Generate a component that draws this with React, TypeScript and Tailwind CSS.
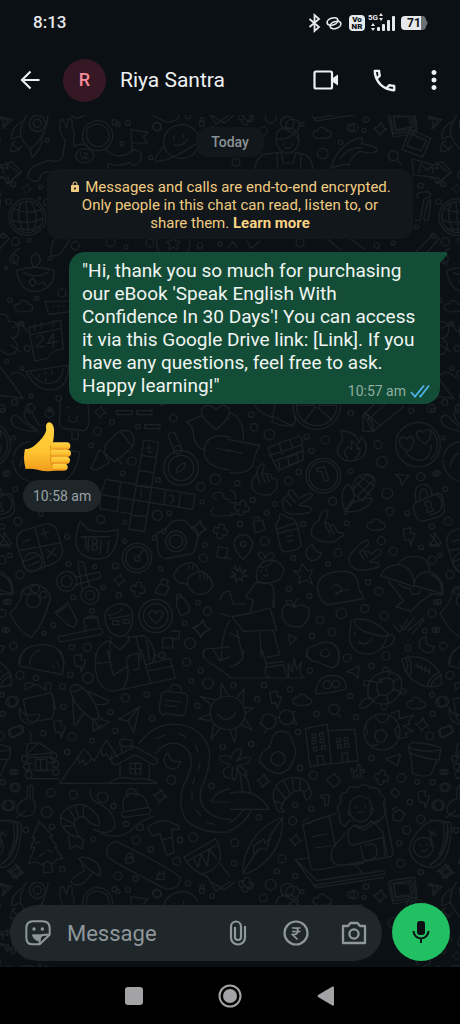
import type { ReactNode } from 'react';
import { MdLock, MdMoreVert, MdOutlineCall } from 'react-icons/md';

type Dot = [number, number, number];

/* Small shapes scattered between the larger doodles */
const Dots = ({ items }: { items: Dot[] }) => (
  <>
    {items.map(([x, y, r]) => (
      <circle key={`${x}-${y}`} cx={x} cy={y} r={r} />
    ))}
  </>
);

const Star = ({ x, y, s = 1 }: { x: number; y: number; s?: number }) => (
  <path
    transform={`translate(${x} ${y}) scale(${s})`}
    d="M4-20Q6-4 20 2Q6 5-2 20Q-6 5-20-2Q-5-5 4-20Z"
  />
);

const Cross = ({ x, y }: { x: number; y: number }) => (
  <path
    transform={`translate(${x} ${y}) rotate(12)`}
    d="M-8-8Q-12-22 0-22Q12-22 8-8Q22-12 22 0Q22 12 8 8Q12 22 0 22Q-12 22-8 8Q-22 12-22 0Q-22-12-8-8Z"
  />
);

const Cloud = ({ x, y }: { x: number; y: number }) => (
  <path
    transform={`translate(${x} ${y})`}
    d="M-20 14Q-34 8-27-4Q-20-10-15-6Q-10-22 4-16Q12-13 12-6Q26-8 26 4Q25 14 14 14Q8 19 0 14Q-10 20-20 14Z"
  />
);

const Bolt = ({ x, y }: { x: number; y: number }) => (
  <path transform={`translate(${x} ${y})`} d="M-17-20L6-25L6-8L19-8L6 28L2 10L-11 12Z" />
);

const Plane = ({ x, y, a = 0 }: { x: number; y: number; a?: number }) => (
  <path transform={`translate(${x} ${y}) rotate(${a})`} d="M-20-12L20-16L4 18L-4-2Z" />
);

const Tile = ({ x, y, children }: { x: number; y: number; children: ReactNode }) => (
  <g transform={`translate(${x} ${y}) scale(.33333)`}>{children}</g>
);

const Doodles = () => (
  <>
    <Tile x={0} y={0}>
      {/* rocket */}
      <path d="M62 62Q58 20 95-16Q122-38 142-30Q150 5 132 52Q118 84 90 102Q70 84 62 62M62 62L36 72Q30 40 64 20M90 102L96 128Q128 100 128 60M48 78Q30 82 32 110Q58 110 66 92M40 88Q46 100 58 100" />
      <circle cx="112" cy="25" r="24" />
      <circle cx="112" cy="25" r="12" />
      {/* astronaut */}
      <circle cx="293" cy="62" r="45" />
      <path d="M260 44Q290 12 322 42Q338 78 304 94Q270 100 260 66ZM180 48Q176 12 190 14L200 38L206 10Q220 8 216 40Q226 46 220 70L222 94Q246 82 262 92M182 48Q186 70 196 74L188 124Q180 146 146 136L114 148Q86 160 82 184Q96 204 118 196Q122 174 140 170L196 186M318 104Q344 134 386 116M386 116Q400 94 420 112Q434 134 406 150Q396 154 388 142Q350 160 326 144L320 176" />
      <ellipse cx="254" cy="122" rx="27" ry="21" />
      <path d="M240 112l8 20M250 114l12 2-10 14h14" />
      <path d="M398 112L392 44L444 52L430 66L442 84L396 84" />
      {/* planet */}
      <path d="M592 56Q576 28 544 28Q492 36 490 84Q500 132 548 130Q590 126 596 84M494 92Q460 130 466 138Q500 146 596 82M522 64v10M550 58v10M524 88Q546 98 562 74" />
      {/* woman with bun */}
      <circle cx="862" cy="24" r="20" />
      <path d="M828 76Q824 40 862 38Q900 42 896 80Q890 112 864 116Q834 112 828 76M828 72Q866 76 882 54Q892 70 896 76M850 84v6M876 84v6M854 98Q864 104 872 96M764 164Q768 128 790 118L842 112M886 112L918 120Q938 134 938 164M832 112V162M902 116V162M844 114L850 144H880L886 114" />
      {/* dolphin */}
      <path d="M992 160Q1012 94 1064 74Q1070 66 1088 70L1084 86Q1130 92 1132 108Q1106 120 1080 108Q1048 130 1048 150Q1034 146 1020 152Q1006 152 992 160M1020 132Q1044 96 1086 98" />
      <path d="M1160-8L1240-10L1248 54L1180 66L1164 2M1180 6L1228 4L1234 42L1188 48ZM1230 42L1292 70L1268 126L1206 104ZM1236 58L1280 76L1262 108L1220 92Z" />
      <Plane x={1302} y={22} a={20} />
      <path d="M1236 132L1300 150L1326 140L1355 172L1310 206L1302 186L1240 180ZM1256 174L1262 146L1280 166L1296 152L1300 174" />
      <circle cx="1180" cy="122" r="15" />
      <path d="M1191 134l12 14M635 0l38 24L704 0M720-5l24 26 20-24M0 158l24 2-6-18 40 34-36 32 4-20-26 2" />
      <Cloud x={968} y={54} />
      <Star x={1140} y={42} />
      <Star x={80} y={222} s={0.7} />
      {/* globe */}
      <circle cx="82" cy="306" r="55" />
      <circle cx="82" cy="306" r="47" />
      <path d="M40 280Q80 300 126 284M36 316Q84 330 128 310M50 340Q90 350 116 334M64 262Q44 306 72 350M92 260Q122 300 98 350M78 260Q82 310 84 352" />
      {/* bones */}
      <path d="M1252 122M1256 250Q1242 236 1262 232L1284 230Q1298 236 1286 248L1272 252L1262 310Q1260 322 1246 314M1284 258L1292 254L1286 312Q1270 326 1272 304Z" />
      {/* candle bowl */}
      <path d="M50 466Q104 448 162 466Q164 520 110 530Q58 530 50 466ZM70 472Q106 494 146 470M86 500l12-10 12 12-12 12zM116 508l14-8 8 12M102 456Q82 432 108 414Q136 440 102 456M158 378L152 420Q176 430 192 400L226 350M226 350Q200 356 158 378" />
      <circle cx="520" cy="384" r="50" />
      <path d="M520 366l7 12 14 2-10 10 2 14-13-7-13 7 2-14-10-10 14-2ZM684 400l14-20 14 18M740 376l14 24 26-22M970 360L1022 406M1040 362L1096 404M1246 412L1302 356L1318 370L1270 424" />
      <path d="M1350 400Q1310 420 1340 450M136 560L210 558M136 560L146 598L210 590M160 574h4M174 574h4M188 574h4" />
      <Cloud x={72} y={574} />
      {/* calendar */}
      <path d="M86 638L182 616L190 702Q156 704 142 730L104 738ZM90 660L184 640M104 628v18M124 622v18M160 616v18M108 666Q130 654 130 674L108 696L134 694M160 656L142 686L172 680M160 656V700" />
      <path d="M-20 610Q20 580 26 620Q60 616 56 650Q50 672 34 668Q66 690 42 716Q20 724 2 704" />
      {/* melon slice */}
      <path d="M78 770L206 750Q206 806 170 822Q112 836 78 770ZM92 774Q120 812 158 804Q184 798 190 762M116 778v8M136 770v8M156 768v8M138 790v8" />
      <path d="M-6 748L16 776L70 850L-10 840M1324 640L1354 624L1372 650M1322 780Q1340 760 1370 790M1322 690l30 20" />
      <Dots
        items={[
          [354, 28, 6], [470, 34, 12], [606, 14, 6], [790, 48, 12], [906, 28, 6], [1052, 38, 10], [968, 116, 16], [1022, 82, 7],
          [142, 76, 6], [366, 86, 6], [452, 128, 6], [708, 142, 12], [1092, 46, 6], [40, 208, 7], [122, 216, 6], [26, 260, 8],
          [118, 250, 4], [140, 262, 9], [1262, 212, 8], [1250, 336, 6], [10, 362, 7], [46, 380, 12], [88, 376, 6], [226, 392, 12],
          [332, 382, 13], [378, 396, 6], [450, 384, 12], [600, 392, 8], [660, 386, 6], [900, 384, 12], [1130, 392, 8], [1180, 384, 6],
          [42, 432, 13], [150, 430, 6], [18, 460, 5], [30, 556, 7], [186, 534, 12], [110, 550, 6], [64, 626, 7], [82, 700, 9],
          [20, 738, 6], [66, 760, 6], [94, 842, 6], [176, 850, 8], [44, 862, 9], [90, 880, 14], [150, 884, 6], [8, 886, 6],
        ]}
      />
    </Tile>

    <Tile x={0} y={285}>
      {/* chillies and popsicle */}
      <path d="M34 52Q30 80 56 84Q92 98 108 92Q70 70 60 54Q46 40 34 52M72 34Q72 60 88 72Q112 88 116 98M72 34Q86 22 98 40Q104 60 120 76M86 30Q80 14 94 10M182 -6L178 66Q180 90 214 88L250 92Q266 88 268 60L262-6M216 90V116Q224 124 234 116V92M208 48V62Q218 72 230 62V46M204 22h4M232 22h4" />
      <Star x={300} y={36} s={0.9} />
      <path d="M350 32h46v12h-46zM410 32h46v12h-46zM434 74h46v12h-46zM460 0l24 16L510 6" />
      {/* glue tube */}
      <path d="M318 132L352 98Q380 82 398 102Q408 132 392 146L344 186L312 158ZM360 94L398 140M312 158L298 150L272 206L288 210L328 188L312 158M350 176l16 16" />
      {/* tea pot behind the reply */}
      <path d="M-10 84Q24 98 22 140Q20 170-10 184M40 170Q50 130 90 124M38 180Q44 232 90 246L190 246Q230 220 240 156L180 148M60 200Q64 170 86 160" />
      {/* crossword */}
      <path d="M432 120L476 128L434 394L386 388ZM424 166L468 172M416 212L460 218M410 258L452 264M394 346L440 350M318 238L586 284L578 328L302 284ZM362 246L352 336M302 284L300 326L396 342M496 268L492 314M542 276L536 322M446 134v20q4 6 10 0M440 144h16M424 270v22M508 286q18 0 8 10q14 6-6 12" />
      {/* compass */}
      <circle cx="543" cy="204" r="52" />
      <circle cx="543" cy="204" r="38" />
      <path d="M528 218Q530 196 556 188Q558 210 528 218M522 152L504 108Q510 92 524 98L546 146" />
      <circle cx="534" cy="150" r="12" />
      {/* speech heart */}
      <path d="M648 88Q596 50 606 26Q624 4 648 30Q672 4 686 26Q696 54 648 88M606 46L560 66Q584 84 580 110Q588 144 616 152M690 112Q636 98 618 130Q604 162 624 184Q644 206 690 210M650 144L690 154M650 300Q630 288 646 278Q670 272 672 294L690 300M640 322Q624 340 644 348L700 346" />
      {/* calculator */}
      <path d="M70 392L136 372Q164 368 172 394L188 450Q188 478 160 490L104 512Q80 524 70 494L50 430Q48 400 70 392M104 380L136 500M58 452L184 428M68 426L90 418M120 402L146 396M130 386L138 412M138 448L170 468M166 444L142 474M74 484L110 468M84 498L118 484" />
      <circle cx="98" cy="486" r="28" />
      {/* cat */}
      <path d="M240 364L264 388Q296 398 326 394L354 388Q354 446 324 470Q276 488 240 458Q216 430 240 364M244 410L258 416L258 448M266 412L264 454M304 420L300 462M326 422L322 458M244 410H328" />
      <circle cx="284" cy="424" r="8" />
      <circle cx="284" cy="442" r="9" />
      <circle cx="411" cy="474" r="44" />
      <circle cx="411" cy="474" r="34" />
      <circle cx="411" cy="476" r="8" />
      <path d="M415 470l14-18M160 320Q190 340 220 322" />
      {/* camera */}
      <path d="M468 402L500 384L510 370Q530 354 560 364L570 378Q596 384 594 406L586 446Q582 466 558 464L500 476Q478 476 474 450Z" />
      <circle cx="528" cy="424" r="31" />
      <circle cx="528" cy="424" r="20" />
      <circle cx="492" cy="394" r="7" />
      <Star x={596} y={386} s={1.2} />
      <Cross x={662} y={394} />
      <path d="M656 440L684 446L678 476L650 470ZM676 470l18 8" />
      {/* scissors */}
      <circle cx="200" cy="544" r="30" />
      <circle cx="200" cy="544" r="17" />
      <circle cx="270" cy="586" r="27" />
      <circle cx="270" cy="586" r="14" />
      <path d="M226 532L298 516Q306 526 298 534L228 554M246 566L234 488Q244 480 252 490L268 560" />
      <Star x={358} y={540} s={0.9} />
      <Cross x={414} y={568} />
      {/* pizza */}
      <path d="M80 566Q98 544 124 560Q154 574 150 600Q132 670 94 712Q60 700 30 640Q70 600 64 576L80 566" />
      <circle cx="100" cy="602" r="21" />
      <circle cx="80" cy="572" r="11" />
      <circle cx="106" cy="566" r="12" />
      <circle cx="130" cy="584" r="10" />
      {/* buns */}
      <path d="M560 552Q520 548 522 522Q542 488 574 488Q594 494 596 514M562 546Q562 520 604 514Q640 530 638 560Q620 588 590 582Q562 570 562 546M566 496v12M578 496v12M600 524v12M612 522v14M622 526v14M478 552L508 560L496 586L464 578ZM482 550L486 536L504 542L502 556" />
      {/* tube and stamp */}
      <path d="M164 638L204 608L232 664L222 682L206 676ZM172 640L200 618M176 710L300 684Q316 694 302 704L182 726Q172 722 176 710M256 690L252 656L292 652L298 680M258 654Q270 644 288 650M530 598L546 590L566 614L568 634L544 648L530 620ZM530 598l0-12 10-4 6 10" />
      <circle cx="467" cy="648" r="50" />
      <circle cx="467" cy="648" r="37" />
      <path d="M467 670Q444 650 446 640Q456 624 467 640Q480 624 490 640Q490 652 467 670" />
      {/* student */}
      <path d="M318 672Q304 626 350 612Q392 606 398 644Q398 700 362 710Q326 704 318 672M330 656L390 646M338 662h18v12h-18zM370 658h18v12h-18zM324 646Q354 644 368 624M330 708L334 728L360 750L386 722L384 706M286 780Q288 738 326 722M386 712L430 706Q466 730 464 780M330 724V780M408 710L424 780M440 720L448 780" />
      <Star x={604} y={686} s={1.3} />
      <path d="M488 714h30v30h-30zM516 694l22 0 0 22h-22M60 790Q60 740 110 736Q180 724 192 790M664 780Q664 700 690 660M660 600Q670 570 690 574M660 640L690 650M612 770Q600 740 640 746L690 740M-10 390L30 440L-10 436M-10 520Q40 530 34 584L-10 580M-10 282Q36 276 36 316Q36 340-10 346" />
      <Dots
        items={[
          [148, 40, 12], [336, 66, 7], [414, 80, 7], [520, 54, 11], [292, 94, 12], [396, 184, 13], [274, 136, 7], [368, 220, 7],
          [40, 114, 6], [16, 222, 7], [46, 268, 7], [646, 238, 16], [602, 260, 12], [474, 240, 7], [606, 306, 6], [472, 346, 15],
          [508, 340, 7], [302, 358, 12], [374, 366, 6], [54, 364, 12], [122, 342, 7], [202, 410, 8], [374, 424, 6], [464, 414, 7],
          [30, 466, 7], [60, 524, 12], [206, 492, 7], [284, 500, 6], [346, 498, 9], [614, 434, 7], [610, 474, 12], [482, 506, 6],
          [310, 562, 7], [356, 586, 8], [220, 592, 7], [276, 632, 7], [18, 606, 7], [160, 676, 7], [14, 690, 7], [132, 700, 6],
          [40, 738, 11], [216, 742, 8], [262, 742, 12], [570, 730, 16], [594, 608, 7], [622, 634, 12], [554, 670, 7], [486, 766, 9],
        ]}
      />
    </Tile>

    <Tile x={230} y={285}>
      <path d="M0 38Q44 56 40 120M-6 118L90 136Q76 154 68 196Q54 224 0 218M-6 150L36 160M70 12Q98 50 136 52L186 78Q202 64 194 50M134 14L126 66Q176 86 190 72" />
      {/* wheel */}
      <circle cx="260" cy="16" r="72" />
      <circle cx="260" cy="16" r="61" />
      <circle cx="260" cy="16" r="8" />
      <path d="M254 24L220 66M266 24L306 60M268 16H320M200 16H250" />
      <path d="M400 44L440 6M430 94L520 20M400 44L398 94L430 94ZM400 44Q416 42 416 58Q432 62 430 94M416 58L476 2M450 76L404 36" />
      {/* chocolate bar */}
      <path d="M114 142L206 108Q216 110 216 126L220 180L146 212L130 184ZM116 168L216 134M130 184L220 152M148 130L156 162M180 120L190 150M146 184L150 208M174 172L176 196L206 184L200 162Z" />
      <path d="M332 92Q342 110 334 128Q308 156 340 178Q366 190 396 172Q422 144 396 110L386 130Q384 96 332 92M354 174Q334 160 354 140L364 148Q368 130 364 122Q386 134 382 148L390 144Q392 164 374 176" />
      {/* heart eyes */}
      <circle cx="564" cy="134" r="67" />
      <path d="M534 154Q504 140 508 120Q516 104 530 118Q540 100 552 118Q554 136 534 154M586 132Q556 116 560 98Q568 86 580 98Q590 80 602 96Q606 112 586 132M528 156Q546 184 578 180Q604 170 604 136" />
      {/* hands */}
      <path d="M94 192Q84 196 80 222Q60 244 66 264Q84 290 122 284Q144 270 142 248Q138 230 126 236L122 224Q114 216 110 224Q102 214 94 224L102 200Q104 190 94 192M110 226L118 246M96 226L108 250M80 222L90 252" />
      <path d="M160 294Q154 318 166 336Q184 348 238 338Q250 326 238 320L206 316L246 290Q250 278 236 280L206 296L186 270Q170 270 176 284L160 294M176 284L196 308M166 298L184 318M288 330Q270 334 268 360Q236 380 246 406Q270 434 316 424L342 404Q338 394 324 398L312 376Q302 370 300 380Q294 364 284 372L292 344Q298 332 288 330M284 372L300 400M300 380L312 402M410 420Q384 432 376 448Q352 466 358 490Q372 518 416 508L444 502Q452 488 436 488L418 486L452 462Q458 446 442 448L424 464Q414 446 404 456Q396 448 388 456L414 434Q420 422 410 420M388 456L402 478M404 456L412 472" />
      <circle cx="280" cy="227" r="52" />
      <circle cx="280" cy="227" r="43" />
      <path d="M258 206L284 200L296 240L284 244L274 214L262 216Z" />
      {/* corn */}
      <path d="M370 250Q380 222 412 222Q444 226 430 262L396 302L370 280ZM376 244L420 286M390 230L432 258M410 224L434 238M372 266L412 222M382 290L434 236M356 252Q322 276 346 334Q372 312 372 290Q370 266 356 252M346 334Q352 306 388 302Q410 288 428 298Q404 342 346 334M346 330L366 300" />
      <circle cx="348" cy="338" r="5" />
      <Plane x={514} y={238} a={10} />
      {/* padlock */}
      <path d="M556 308L624 280Q636 280 638 292L644 330Q640 344 626 350L578 364Q562 362 556 346L550 320Q550 312 556 308M558 304Q548 252 584 252Q604 258 606 284M570 298Q566 268 582 266Q590 270 592 288M590 338L594 322Q580 316 586 306Q600 298 604 312L602 320L612 332Z" />
      <Cross x={36} y={324} />
      <path d="M0 308L20 308M0 340L22 342M0 270Q20 276 16 296M70 366L98 360L106 390L76 398ZM74 364L70 354L86 350L88 360" />
      {/* bottle */}
      <path d="M140 388L200 368L214 434Q212 444 200 448L168 456Q156 454 152 446ZM138 386Q136 366 150 358L148 346Q156 338 166 350L188 356Q200 366 202 378M144 400L206 384M172 410l14-4M174 424l14-4" />
      <path d="M40 478Q12 452 12 430Q16 406 40 404Q66 408 68 430Q66 454 40 478" />
      <circle cx="40" cy="432" r="8" />
      <path d="M248 434Q254 460 274 458Q268 484 244 482Q226 474 228 454Q234 438 248 434M588 710Q584 742 614 738Q608 764 584 756Q564 742 568 724Q576 710 588 710" />
      <Cloud x={440} y={374} />
      <Bolt x={536} y={408} />
      <Plane x={612} y={422} a={60} />
      {/* girl */}
      <path d="M80 540Q74 496 110 482Q150 476 162 508Q160 540 130 546L120 548Q96 556 80 540M100 480Q76 464 88 456Q102 458 106 476Q114 452 132 462Q136 480 108 482M92 510v6M108 508v6M100 526q8 6 14-2M84 500Q112 506 126 486M78 548L46 592L70 600M78 548Q120 544 130 562L134 620Q124 626 130 600M70 600L60 640L6 650L40 694L140 690L120 624L60 640M20 690L38 770M90 700L94 770M130 694L148 760M0 580L10 612L46 612M0 700L30 714" />
      <path d="M10 504l14 10-8-16M24 514l6-14 2 14 16-4-12 12 18 6-18 2 2 14-10-10-10 14 0-16-16-2 16-6-14-10M190 512L208 516L216 490L232 512L248 510L238 530L248 554L228 540L206 550L210 530Z" />
      <path d="M262 560Q266 512 348 514Q386 520 386 564L402 596L296 614Q266 606 262 560M308 560Q316 550 330 558Q340 576 316 584Q318 574 358 568" />
      {/* parasols */}
      <path d="M452 526Q468 494 508 494Q554 504 552 560ZM506 492Q524 462 574 472Q598 484 598 514M552 556Q556 512 604 516Q642 536 640 582ZM474 542L520 602L498 620L544 634L570 606L606 582M506 552Q524 566 540 564L546 584L568 580L572 570" />
      {/* apple */}
      <path d="M194 622Q164 602 156 632Q154 670 188 680L214 680Q240 660 238 630Q222 606 194 622M194 620L182 600L168 602Q168 616 190 616M196 618Q192 602 206 596" />
      {/* cup */}
      <path d="M372 658Q424 648 474 700Q472 716 436 704Q372 690 372 658M364 662L358 710Q360 756 408 762Q454 766 470 712M470 712Q486 694 494 716Q488 740 458 744M388 726Q402 740 424 720M374 696v6M424 716v4M230 770Q228 736 256 738Q278 720 302 728Q330 738 326 780M272 768Q270 746 294 748M492 676L508 696L532 660M508 672l14 18 32-38M534 692l46-38M548 700l34-40M176 704l4 30 20-18z" />
      <Dots
        items={[
          [64, 44, 8], [72, 82, 11], [118, 104, 16], [230, 110, 8], [286, 120, 12], [362, 40, 8], [244, 152, 8], [206, 216, 8],
          [176, 242, 12], [22, 250, 8], [444, 134, 12], [456, 186, 16], [544, 32, 8], [604, 26, 12], [362, 214, 7], [472, 280, 16],
          [308, 304, 12], [572, 230, 12], [622, 220, 8], [480, 334, 12], [532, 340, 7], [68, 300, 8], [134, 312, 7], [110, 338, 7],
          [220, 372, 8], [350, 370, 7], [30, 372, 8], [104, 424, 13], [324, 458, 12], [190, 474, 7], [294, 492, 7], [454, 422, 12],
          [490, 454, 12], [574, 442, 7], [606, 380, 8], [606, 480, 12], [414, 546, 8], [446, 574, 12], [176, 566, 8], [238, 588, 7],
          [270, 660, 12], [334, 640, 16], [404, 626, 12], [462, 648, 12], [306, 696, 12], [246, 708, 8], [606, 640, 12], [626, 606, 8],
          [584, 692, 7], [534, 744, 8], [622, 690, 7],
        ]}
      />
    </Tile>

    <Tile x={0} y={535}>
      {/* taco */}
      <path d="M56 42Q56 8 90-10M60 48L186 74Q200 30 180 0M56 42L60 50M88 44Q90 10 120 0M160 46v4M172 34v4M176 48v4" />
      <Bolt x={238} y={38} />
      {/* desk of the student */}
      <path d="M288 10Q280 80 304 106Q336 136 370 114Q386 90 384 48L340 76L322 0M290 40L330 36M370 118L526 84L510 24L440 44M424 0L452 98M446 62L520 48M456 38L464 14L484 24M384 50Q372 24 390 16L414 10L418 56L400 60M612 0Q604 30 640 44L690 80M640 0L660 32L690 20" />
      {/* backpack */}
      <path d="M70 148L152 128Q160 130 162 190L156 206L96 216Q78 212 78 190ZM72 120L110 102L140 122Q128 96 146 96Q158 104 150 126M76 112L74 100L98 98L102 108M58 172Q64 204 118 192Q120 210 92 222Q54 220 58 172M158 134L166 178" />
      {/* plane */}
      <path d="M218 142Q200 104 228 104Q252 108 276 146Q300 188 296 206L278 208Q232 178 218 142M216 124Q238 124 248 112M254 120L326 152Q326 168 286 162M218 144L222 224L228 226L250 190M278 208L280 244L304 226M296 204L328 216L296 238M284 210l12 24" />
      <path d="M356 208L418 170L402 248L384 212ZM384 212L418 170M26 240L54 228Q66 232 66 246L36 262Q22 256 26 240M96 276Q86 262 96 256Q84 250 92 244" />
      <Bolt x={178} y={236} />
      <path d="M484 134Q490 122 504 124L554 130Q566 136 562 150L556 188Q550 200 536 196L496 190L488 196L480 186L478 170ZM508 122Q510 100 530 104Q546 112 544 128M496 150L544 156M496 166L530 170" />
      {/* sun */}
      <path d="M690 138Q640 140 630 180Q630 222 660 234L690 240M634 164L602 140L646 150M630 192L594 206L630 212M640 226L634 268L658 238M662 140L664 100L684 136M652 190Q664 214 690 206" />
      {/* log cabin */}
      <path d="M78 312L82 282L118 278L162 308L78 316M84 308L116 280M80 322H160M78 340H100M146 338H168M80 360H160M82 386H176M106 328L140 328V362H108ZM122 328v34" />
      <Dots items={[[74, 326, 9], [80, 350, 9], [86, 374, 10], [160, 318, 10], [166, 342, 10], [168, 366, 9]]} />
      {/* mountain house */}
      <path d="M180 398L250 298Q258 296 282 334L320 270L352 320M232 322L238 340L250 330L256 346L274 328M302 300L308 318L320 312L330 330L338 310M180 400H472Q440 380 404 388Q360 374 330 398M336 324L406 290L472 328Q474 344 460 344L406 314L346 346Q330 340 336 324M360 340V384M448 344V384M364 292L366 310M396 292V288M358 276Q362 266 376 268Q398 266 398 278Q398 290 378 290Q358 290 358 276M390 340h32v32h-32zM406 340v32M390 356h32" />
      {/* road */}
      <path d="M418 280Q460 222 526 222Q610 230 628 300Q634 350 606 410Q590 450 620 484Q650 508 690 508M468 310Q492 276 530 280Q566 288 574 326Q576 360 552 404Q530 460 558 510Q600 552 690 546M470 266L494 254M536 250L556 260M586 286L594 306M600 340L594 362M584 384L578 402M576 430V454M588 480L602 496M620 516L644 524" />
      <path d="M506 310Q508 340 542 334Q538 360 510 356Q484 342 496 316Q500 310 506 310M690 320Q648 310 664 334L690 344M690 350Q660 356 674 380L690 386M632 454Q650 424 690 416M640 456H690" />
      {/* guitar and tree */}
      <path d="M80 446L82 412Q90 400 100 410L98 446Q112 470 100 492Q72 508 52 488Q46 456 80 446M90 410V450M50 502L76 482M-10 512Q36 506 50 518Q60 546 48 582Q34 632-10 650M40 520Q50 580 26 614M0 560q10 12 0 30" />
      <path d="M118 514L96 564L106 562L92 594L104 592L86 640L110 636L124 644L140 634L158 642L170 628L188 624L164 592L172 590L148 560L158 558ZM132 640L130 668L158 666L152 636M106 582l10-6M142 600l14 6M118 618l16-8" />
      {/* shrimp and beanie */}
      <path d="M214 556Q176 530 182 496Q206 460 246 464Q270 468 294 500Q300 520 298 528Q270 526 254 500Q226 500 222 520L236 562L214 556ZM206 476L226 508M226 468L236 502M250 466L250 500M184 502L218 520M186 530L222 526M206 556L210 596L230 586L246 598L250 570L236 558M270 418Q266 450 300 462Q350 492 344 530Q330 560 280 538M300 550Q360 570 392 542Q420 510 464 498" />
      <path d="M370 480Q362 432 398 430Q440 430 444 474M366 486Q360 498 372 502L446 492Q458 480 446 472ZM384 440Q372 416 398 416Q416 424 408 438" />
      <Star x={480} y={438} />
      {/* hammer */}
      <path d="M444 530L458 522Q490 500 536 528L538 538L514 538L522 608L500 616L484 564L480 550L460 558Q448 552 444 530M484 570L514 562" />
      {/* skateboard and mushroom */}
      <path d="M348 574Q310 584 324 620Q332 634 500 718Q542 716 540 684Q530 664 348 574M382 612l14-4M376 626l20-6 6 16-22 4zM382 612l-6 14M396 610l6 24M480 662l-10 26M490 660l4 28M470 674l22-4M468 688l24 0" />
      <path d="M236 626Q250 612 292 640Q306 660 300 678Q260 660 236 626M246 640L252 664Q210 682 214 698Q230 716 258 692L276 670M552 622L646 566Q658 576 662 630Q640 668 604 672Q570 656 552 622M560 634L650 586M580 624L594 652L604 612L622 648L628 598L650 626M622 680L648 724L690 694M604 672L622 680M662 642L690 680" />
      <Star x={44} y={664} s={1.1} />
      <path d="M-10 700L24 712L6 736" />
      <Dots
        items={[
          [60, 76, 12], [108, 84, 8], [34, 156, 16], [210, 74, 8], [264, 84, 16], [188, 110, 8], [190, 170, 8], [376, 144, 12],
          [440, 134, 8], [560, 36, 12], [602, 62, 8], [574, 92, 7], [624, 100, 16], [592, 168, 8], [456, 206, 8], [332, 186, 8],
          [346, 242, 8], [216, 260, 12], [130, 250, 8], [276, 272, 7], [202, 306, 8], [42, 412, 12], [152, 428, 12], [38, 366, 8],
          [22, 466, 16], [140, 486, 16], [220, 434, 12], [308, 442, 16], [340, 468, 8], [514, 390, 13], [668, 290, 8], [634, 408, 8],
          [378, 522, 8], [420, 532, 10], [408, 570, 12], [452, 598, 8], [540, 570, 8], [580, 562, 13], [156, 530, 8], [78, 540, 8],
          [280, 568, 7], [530, 634, 12], [186, 658, 8], [354, 678, 12], [406, 686, 8], [344, 718, 8], [472, 732, 12], [564, 700, 8],
          [636, 738, 7], [384, 720, 7], [606, 722, 8],
        ]}
      />
    </Tile>

    <Tile x={230} y={535}>
      <path d="M-6 84H226M0 50Q44 40 40 0M96 0L110 44Q98 80 120 82M110 22L150 14M114 40L160 34M110 52L160 44L172 82M176 80L174 40L186 66L192 22L200 60L214 36L210 70L220 82" />
      <path d="M230 0Q226 30 262 36L304 54Q334 48 326 0M274 16Q292 30 300 8M256 132Q262 80 300 76Q350 76 348 112Q346 124 256 132" />
      <circle cx="292" cy="104" r="12" />
      <circle cx="318" cy="102" r="11" />
      <Plane x={374} y={70} a={-20} />
      {/* turtle */}
      <path d="M436 76Q480 50 512 84Q524 130 486 156Q446 174 416 142Q406 100 436 76M442 98Q476 70 490 96Q496 130 462 136Q436 140 442 98M442 98L416 92M446 84L456 98M476 78L482 62M490 96L510 82M492 118L516 128M470 136L476 160M446 136L428 150M458 66Q456 48 472 52L476 64M400 98Q406 86 420 96L412 106L402 108ZM424 142Q392 144 388 172Q406 180 426 156M514 114Q532 116 526 132L512 132M454 168Q456 182 468 178L472 166" />
      {/* rugby ball */}
      <path d="M516 26Q580 6 624 60Q638 84 634 104Q588 122 548 90Q520 64 516 26M534 20Q552 50 538 80M526 22Q538 46 528 68M634 76Q608 86 602 110M628 66Q598 80 592 108M556 46L602 66M562 40v14M574 44v16M586 50v16M598 56v16" />
      {/* right half of the sun */}
      <path d="M0 138Q42 146 46 190Q40 232 0 240M22 142L42 116L40 158M46 172L72 174L46 190M44 206L66 240L34 224M20 238L14 278L0 240M0 204Q14 200 16 188" />
      <Bolt x={136} y={148} />
      <Cloud x={218} y={150} />
      <Cloud x={560} y={160} />
      <circle cx="312" cy="178" r="15" />
      <path d="M322 190l10 12" />
      <circle cx="116" cy="214" r="22" />
      <circle cx="170" cy="202" r="22" />
      <path d="M138 206Q144 200 148 204M98 226L88 218M112 238L102 250M186 188L196 184M192 206L202 222L186 218" />
      {/* egg */}
      <path d="M130 256Q150 234 176 250Q188 264 192 288Q204 302 190 330Q180 366 148 370Q120 372 90 336Q82 314 118 290Z" />
      <circle cx="144" cy="326" r="21" />
      {/* buildings */}
      <path d="M226 236L292 222L304 340L240 350ZM298 242L374 238L384 332L304 342M246 254l11-2 1 11-11 2zM268 250l11-2 1 11-11 2zM246 272l11-2 1 11-11 2zM270 268l11-2 1 11-11 2zM250 292l11-2 1 11-11 2zM274 288l11-2 1 11-11 2zM320 266l11-2 1 11-11 2zM342 264l11-2 1 11-11 2zM322 284l11-2 1 11-11 2zM344 282l11-2 1 11-11 2zM264 346L260 320L278 316L282 344M338 336L336 310L352 308L354 334" />
      {/* football on fire */}
      <circle cx="456" cy="246" r="54" />
      <path d="M440 242L458 238L472 254L462 276L442 276L434 258ZM436 200L450 218L470 216L478 198M408 226L412 250L404 258M424 288L442 284M506 226L494 238L502 262M484 190L508 182L508 206L552 196Q530 214 538 222L520 228L550 244Q520 244 530 262L512 264" />
      <Star x={576} y={224} />
      <path d="M468 326L512 312L502 348ZM536 292Q540 274 560 278Q600 280 632 294L628 330Q580 326 538 308ZM536 292Q580 310 630 300M542 312L548 370Q576 384 602 374L622 330M632 236L662 226Q672 232 670 246L640 264Q626 252 632 236" />
      {/* palm island */}
      <path d="M0 330Q14 290 34 298Q38 312 20 334Q60 312 62 328Q58 344 24 346Q56 360 50 380Q30 378 20 350Q24 384 12 392Q0 380 10 350M30 374L38 428M44 370Q60 400 60 430M0 430Q80 410 118 478H0M64 480Q44 524 0 542M40 480Q24 504 0 516" />
      <Star x={100} y={392} />
      {/* croissant */}
      <path d="M130 444Q128 396 178 384Q230 376 242 420Q248 444 230 450Q220 438 222 426Q200 410 164 450L152 474L164 484Q144 492 138 470ZM140 414L166 444M160 390L180 430M186 382L192 424M212 386L208 420M240 412L224 426M132 452L158 462" />
      <path d="M290 390L312 370L332 392L312 412ZM270 440Q278 430 298 436L294 468L284 466L284 446ZM482 428l12-14 16 14-12 16zM488 492l20-14 18 14-14 22-22-4zM492 484l-4-8 12-4" />
      <Cross x={454} y={382} />
      <path d="M380 364l4-20 6 0 0 18 12-4 2 8-14 4 8 14-8 0-8-10-6 12-8-4 6-14-12-4 2-8z" />
      <Bolt x={580} y={446} />
      {/* curly hair at the laptop */}
      <path d="M346 530Q322 520 330 494Q312 474 334 456Q324 430 350 426Q356 402 382 414Q402 394 422 414Q450 408 450 432Q474 444 462 466Q474 490 456 504Q446 524 424 518M346 530Q352 512 368 510M358 480Q356 442 392 438Q426 442 424 480Q420 512 392 516Q362 510 358 480M376 470v4M406 468v4M384 486Q392 492 400 484M360 496Q350 498 356 484M426 474Q438 480 424 492" />
      <path d="M218 524L318 490M218 516Q226 506 236 504M218 524L242 650Q246 662 262 660L480 620Q492 618 488 600L460 454M242 520l-6 2M246 560L290 552M254 594L300 588M298 500L316 590M370 526L310 590Q296 620 312 640Q330 650 400 640M376 524Q400 542 424 512L458 544L472 616M370 526L402 540L444 510M356 548Q350 580 366 586L460 562L464 618M392 586L400 628Q420 634 438 620Q446 590 430 582L404 586M196 628L236 624M196 628L252 706L464 672L462 662L260 692ZM252 706Q256 716 268 712L460 682M376 644L398 670" />
      {/* surfboard */}
      <path d="M158 504Q160 600 82 654Q44 676 38 670Q38 600 90 544Q130 506 158 504M38 670L82 600M118 560L156 506M70 588L102 566L104 580L122 564L108 600L92 594L72 616Z" />
      <Star x={196} y={570} s={0.9} />
      {/* avocado */}
      <path d="M640 520Q660 506 664 530Q660 640 610 652Q546 650 538 596Q544 560 580 526Q612 502 640 520M652 522Q656 614 600 644" />
      <circle cx="580" cy="592" r="30" />
      <path d="M570 584v4M590 580v4M574 602Q584 608 592 598M596 540l8 10 16 6M600 560l12-16" />
      <Cross x={48} y={704} />
      <Star x={652} y={666} />
      <Plane x={612} y={718} a={8} />
      <path d="M480 692L554 682L562 744L490 752ZM490 700L544 692L550 732L496 740Z" />
      <Dots
        items={[
          [10, 106, 8], [102, 106, 8], [180, 118, 8], [82, 148, 8], [240, 62, 8], [352, 24, 12], [424, 48, 8], [468, 18, 12],
          [360, 138, 8], [378, 202, 8], [260, 192, 8], [204, 246, 8], [64, 282, 8], [606, 134, 7], [640, 154, 16], [608, 192, 8],
          [600, 258, 12], [424, 324, 8], [210, 354, 8], [250, 376, 12], [514, 384, 13], [562, 396, 7], [608, 396, 8], [646, 366, 8],
          [648, 412, 12], [540, 456, 8], [628, 466, 16], [196, 464, 8], [244, 476, 8], [86, 502, 8], [188, 512, 12], [530, 540, 12],
          [572, 508, 12], [508, 580, 8], [156, 626, 12], [14, 578, 12], [12, 640, 8], [140, 664, 8], [196, 678, 8], [122, 704, 16],
          [512, 640, 12], [572, 666, 8], [372, 734, 12], [188, 728, 20], [408, 710, 8],
        ]}
      />
    </Tile>
  </>
);

const Wallpaper = () => (
  <svg className="absolute inset-0 h-full w-full" aria-hidden="true">
    <defs>
      <g id="doodles" fill="none" stroke="#1a2124" strokeWidth="3.6" strokeLinecap="round" strokeLinejoin="round">
        <Doodles />
      </g>
      <pattern id="chat-wallpaper" width="430" height="767" patternUnits="userSpaceOnUse">
        <use href="#doodles" />
        <use href="#doodles" x="-430" />
        <use href="#doodles" y="-767" />
      </pattern>
    </defs>
    <rect width="100%" height="100%" fill="url(#chat-wallpaper)" />
  </svg>
);

const StatusBar = () => (
  <div className="flex h-[45px] items-center justify-between pr-[31px] pl-[33px] text-[#e6e9eb]">
    <span className="text-[17px] font-medium">8:13</span>
    <svg width="122" height="20" viewBox="0 0 122 20" role="img" aria-label="Bluetooth, linked, 5G, battery 71%">
      <path d="M2.5 6L12 14L7.5 18V2L12 6L2.5 14" fill="none" stroke="currentColor" strokeWidth="1.8" />
      <g fill="none" stroke="currentColor" strokeWidth="1.7">
        <ellipse cx="25.5" cy="8.5" rx="5.6" ry="3.4" transform="rotate(-20 25.5 8.5)" />
        <ellipse cx="28.5" cy="12" rx="5.6" ry="3.4" transform="rotate(-20 28.5 12)" />
      </g>
      <rect x="42" y="2" width="16" height="16" rx="4" fill="currentColor" />
      <g fontFamily="Roboto, sans-serif" fontWeight="900" textAnchor="middle">
        <text x="50" y="9" fontSize="8" fill="#0b1014">Vo</text>
        <text x="50" y="16" fontSize="8" fill="#0b1014">NR</text>
        <text x="66" y="7" fontSize="8" fontWeight="700" fill="currentColor">5G</text>
      </g>
      <g fill="currentColor">
        <path d="M72 3l2-3 2 3zM72 5l2 3 2-3zM64 13l2-3 2 3zM64 15l2 3 2-3z" />
        <rect x="70" y="14" width="3" height="4" rx="1" />
        <rect x="75" y="11" width="3" height="7" rx="1" />
        <rect x="80" y="7" width="3" height="11" rx="1" />
        <rect x="85" y="3" width="3" height="15" rx="1" />
      </g>
      <path d="M113 3h2q4 0 4 4q3 3 0 6q0 4-4 4h-2z" fill="#6d7174" />
      <path d="M98 3h16v14h-16q-4 0-4-4v-6q0-4 4-4z" fill="currentColor" />
      <text x="107" y="14" fontSize="12" fontWeight="700" fontFamily="Roboto, sans-serif" textAnchor="middle" fill="#0b1014">
        71
      </text>
    </svg>
  </div>
);

const ChatHeader = () => (
  <header className="flex h-[70px] items-center pl-4 pr-3 text-[#eef1f3]">
    <button type="button" aria-label="Back" className="flex h-10 w-7 items-center justify-center">
      <svg width="20" height="20" viewBox="0 0 20 20" fill="none" stroke="currentColor" strokeWidth="2.2">
        <path d="M19.5 10H2M10.5 1.5L2 10L10.5 18.5" />
      </svg>
    </button>
    <div className="ml-[19px] flex size-[43px] shrink-0 items-center justify-center rounded-full bg-[#361724] text-lg font-medium text-[#f58c9c]">
      R
    </div>
    <h1 className="ml-[14px] flex-1 text-[21px] leading-7">Riya Santra</h1>
    <button type="button" aria-label="Video call" className="flex h-10 w-9 items-center justify-center">
      <svg width="26" height="20" viewBox="0 0 26 20" fill="none">
        <rect x="1.5" y="1.5" width="17.5" height="17" rx="1.5" stroke="currentColor" strokeWidth="2.2" />
        <path d="M19 8.5L25 4.5V15.5L19 11.5Z" fill="currentColor" />
      </svg>
    </button>
    <button type="button" aria-label="Voice call" className="ml-[22px] flex h-10 w-9 items-center justify-center">
      <MdOutlineCall size={29} />
    </button>
    <button type="button" aria-label="More options" className="ml-[18px] flex h-10 w-7 items-center justify-center">
      <MdMoreVert size={30} className="shrink-0" />
    </button>
  </header>
);

const ThumbsUp = () => (
  <svg width="50" height="52" viewBox="0 0 150 156" role="img" aria-label="Thumbs up">
    <defs>
      <linearGradient id="skin" x1="0" y1="0" x2="0" y2="1">
        <stop offset="0" stopColor="#ffd23f" />
        <stop offset=".6" stopColor="#ffc531" />
        <stop offset="1" stopColor="#f09a1c" />
      </linearGradient>
      <linearGradient id="finger" x1="0" y1="0" x2="0" y2="1">
        <stop offset="0" stopColor="#ffd548" />
        <stop offset=".6" stopColor="#fdbf2f" />
        <stop offset="1" stopColor="#e58a18" />
      </linearGradient>
    </defs>
    <path
      d="M6 84Q22 84 34 74Q64 50 70 28Q66 6 78 4Q90 4 93 24Q94 42 90 64L100 76V148Q70 154 44 146Q22 142 8 144Q-1 114 6 84Z"
      fill="url(#skin)"
    />
    <path d="M90 64Q78 74 84 90Q78 98 84 108Q78 118 86 126Q84 140 94 148" fill="none" stroke="#dd8a1a" strokeWidth="3" />
    <rect x="84" y="64" width="58" height="23" rx="11" fill="url(#finger)" />
    <rect x="82" y="86" width="62" height="22" rx="11" fill="url(#finger)" />
    <rect x="84" y="107" width="57" height="22" rx="11" fill="url(#finger)" />
    <rect x="88" y="128" width="46" height="21" rx="10" fill="url(#finger)" />
  </svg>
);

const ReadTicks = () => (
  <svg width="20" height="14" viewBox="0 0 20 14" fill="none" stroke="#4fb3e6" strokeWidth="1.8" aria-label="Read" role="img">
    <path d="M1 8L5 12.5L14 1.5M9.5 11.5L10.5 12.5L19 1.5" />
  </svg>
);

const Messages = () => (
  <main className="relative flex flex-1 flex-col pt-3 text-[#f0f5f2]">
    <span className="self-center rounded-xl bg-[#11171b] px-[15px] py-[5px] text-sm leading-5 font-medium text-[#8b9296]">
      Today
    </span>
    <p className="mx-auto mt-3 w-[366px] max-w-full rounded-xl bg-[#11171b] px-5 pt-[9px] pb-[7px] text-center text-[15px] leading-[18px] text-[#f0cb80]">
      <MdLock size={12} className="mr-1 inline align-[-1px]" />
      Messages and calls are end-to-end encrypted. Only people in this chat can read, listen to, or share them.{' '}
      <a href="#learn-more" className="font-bold text-[#fbd385]">
        Learn more
      </a>
    </p>
    <div className="relative mt-[13px] mr-5 w-[371px] max-w-full self-end rounded-2xl rounded-tr-none bg-[#144d37] pt-[7px] pr-[18px] pb-[7px] pl-[13px]">
      <svg className="absolute top-0 -right-2" width="9" height="14" viewBox="0 0 9 14" aria-hidden="true">
        <path d="M0 0H7Q9 1 8 3L1 11V14H0Z" fill="#144d37" />
      </svg>
      <p className="text-[19px] leading-[23px]">
        "Hi, thank you so much for purchasing our eBook 'Speak English With Confidence In 30 Days'! You can access it via
        this Google Drive link: [Link]. If you have any questions, feel free to ask. Happy learning!"
      </p>
      <div className="absolute right-[10px] bottom-1 flex items-center gap-1 text-sm leading-[18px] text-[#8fae9f]">
        10:57 am
        <ReadTicks />
      </div>
    </div>
    <div className="mt-[17px] ml-[23px] flex flex-col items-start">
      <ThumbsUp />
      <time className="mt-[7px] rounded-2xl bg-[#1e262a] px-[10px] py-[6px] text-sm leading-5 text-[#9aa2a6]">10:58 am</time>
    </div>
  </main>
);

const Composer = () => (
  <form className="relative flex items-end gap-[10px] px-[10px] pb-[6px]" onSubmit={(e) => e.preventDefault()}>
    <div className="flex h-14 min-w-0 flex-1 items-center rounded-full bg-[#1f272b] px-[13px] text-[#8f979b]">
      <button type="button" aria-label="Stickers" className="flex size-[30px] shrink-0 items-center justify-center">
        <svg width="26" height="26" viewBox="0 0 78 78" fill="none" stroke="currentColor" strokeWidth="6" strokeLinejoin="round">
          <path d="M44 73H24Q4 73 4 53V25Q4 4 24 4H53Q74 4 74 25V44L44 73Z" />
          <path d="M44 73V60Q44 44 60 44H74" />
          <path d="M22 44H58Q44 46 44 63Q26 62 22 44Z" fill="currentColor" strokeWidth="2" />
          <circle cx="27" cy="27" r="5" fill="currentColor" stroke="none" />
          <circle cx="52" cy="27" r="5" fill="currentColor" stroke="none" />
        </svg>
      </button>
      <input
        aria-label="Message"
        placeholder="Message"
        className="ml-[14px] h-10 min-w-0 flex-1 bg-transparent text-[22px] outline-none placeholder:text-[#8f979b]"
      />
      <button type="button" aria-label="Attach" className="flex size-[30px] shrink-0 items-center justify-center">
        <svg width="18" height="26" viewBox="0 0 18 26" fill="none" stroke="currentColor" strokeWidth="2.2">
          <path d="M16 6V17.5A7 7 0 0 1 2 17.5V6.5A5 5 0 0 1 12 6.5V17A3 3 0 0 1 6 17V7" />
        </svg>
      </button>
      <button type="button" aria-label="Payment" className="ml-7 flex size-[30px] shrink-0 items-center justify-center">
        <svg width="26" height="26" viewBox="0 0 26 26" fill="none" stroke="currentColor" strokeWidth="2.2">
          <circle cx="13" cy="13" r="11.5" />
          <path d="M9 8H17.5M9 11.5H17.5M9 8H11.5Q15 8 15 11.2Q15 14.5 9.5 14.5L14.5 19.5" strokeWidth="1.7" />
        </svg>
      </button>
      <button type="button" aria-label="Camera" className="ml-7 flex size-[30px] shrink-0 items-center justify-center">
        <svg width="26" height="24" viewBox="0 0 26 24" fill="none" stroke="currentColor" strokeWidth="2.3" strokeLinejoin="round">
          <path d="M2 5H7L9.5 2H16.5L19 5H24V22H2Z" />
          <circle cx="13" cy="13" r="4.6" />
        </svg>
      </button>
    </div>
    <button
      type="button"
      aria-label="Voice message"
      className="flex size-[58px] shrink-0 items-center justify-center rounded-full bg-[#21c063] text-[#0b1014]"
    >
      <svg width="18" height="24" viewBox="0 0 18 24" fill="none" stroke="currentColor" strokeWidth="2">
        <rect x="5" y="1" width="8" height="14" rx="3" fill="currentColor" stroke="none" />
        <path d="M1.5 11A7.5 7.5 0 0 0 16.5 11M9 18.5V23" />
      </svg>
    </button>
  </form>
);

const NavigationBar = () => (
  <nav className="relative flex h-[57px] items-center justify-center gap-[70px] bg-black text-[#a3a3a5]">
    <button type="button" aria-label="Recent apps" className="flex size-[26px] items-center justify-center">
      <span className="size-[18px] rounded-[3px] bg-current" />
    </button>
    <button type="button" aria-label="Home" className="flex size-[26px] items-center justify-center">
      <svg width="24" height="24" viewBox="0 0 24 24">
        <circle cx="12" cy="12" r="10.5" fill="none" stroke="currentColor" strokeWidth="2" />
        <circle cx="12" cy="12" r="7" fill="currentColor" />
      </svg>
    </button>
    <button type="button" aria-label="Back" className="flex size-[26px] items-center justify-center">
      <svg width="18" height="20" viewBox="0 0 18 20" fill="currentColor">
        <path d="M1 9L15.5 0.5Q17 0 17 1.5V18.5Q17 20 15.5 19.5L1 11Q0 10 1 9Z" />
      </svg>
    </button>
  </nav>
);

const App = () => {
  return (
    <div className="flex min-h-screen flex-col bg-[#0b1014] font-[Roboto,sans-serif]">
      <StatusBar />
      <ChatHeader />
      <div className="relative flex flex-1 flex-col overflow-hidden">
        <Wallpaper />
        <Messages />
        <Composer />
      </div>
      <NavigationBar />
    </div>
  );
};

export default App;
